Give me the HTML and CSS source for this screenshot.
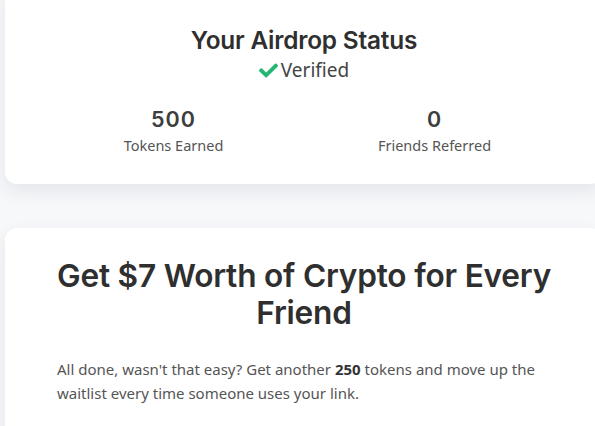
FILE: index.html
```html
<!DOCTYPE html>
<html>
<head>
<meta charset="utf-8">
<link rel="stylesheet" href="styles.css">
</head>
<body>
<div class="page">
  <section class="card status">
    <h2 class="status-title">Your Airdrop Status</h2>
    <div class="verified">
      <svg class="check" viewBox="0 0 512 400" width="19" height="15" aria-hidden="true"><path d="M173.898 383.404l-166.4-166.4c-9.997-9.997-9.997-26.206 0-36.204l36.203-36.204c9.997-9.998 26.207-9.998 36.204 0L192 256.69 432.095 16.596c9.997-9.997 26.207-9.997 36.204 0l36.203 36.204c9.997 9.997 9.997 26.206 0 36.204l-294.4 294.401c-9.998 9.997-26.207 9.997-36.204-.001z" fill="#22b573"/></svg>
      <span>Verified</span>
    </div>
    <div class="stats">
      <div class="stat">
        <div class="stat-num">500</div>
        <div class="stat-label">Tokens Earned</div>
      </div>
      <div class="stat">
        <div class="stat-num">0</div>
        <div class="stat-label">Friends Referred</div>
      </div>
    </div>
  </section>
  <section class="card refer">
    <h1 class="refer-title">Get $7 Worth of Crypto for Every Friend</h1>
    <p class="refer-text">All done, wasn't that easy? Get another <strong>250</strong> tokens and move up the waitlist every time someone uses your link.</p>
  </section>
</div>
</body>
</html>
```

FILE: styles.css
```css
html, body {
  margin: 0;
  padding: 0;
}
body {
  background: #f7f8fa;
  overflow: hidden;
  width: 595px;
  height: 426px;
}
.page {
  display: flex;
  flex-direction: column;
  gap: 44px;
  margin-top: -13px;
  padding-left: 5px;
  width: 598px;
}
.card {
  background: #ffffff;
  border-radius: 12px;
  box-shadow: 0 7px 18px rgba(30, 40, 70, 0.09);
}
.status {
  padding: 38px 38px 28px;
  text-align: center;
}
.status-title {
  margin: 0;
  font-family: Inter, "Liberation Sans", sans-serif;
  font-weight: 600;
  font-size: 24.4px;
  line-height: 30px;
  color: #2f2f2f;
  letter-spacing: -0.2px;
}
.verified {
  display: flex;
  justify-content: center;
  align-items: center;
  gap: 3px;
  margin-top: 1px;
  font-family: "Noto Sans", sans-serif;
  font-size: 19px;
  line-height: 28px;
  color: #444;
}
.check {
  display: block;
  margin-top: 1px;
}
.stats {
  display: grid;
  grid-template-columns: 1fr 1fr;
  margin-top: 22px;
}
.stat-num {
  font-family: Inter, "Liberation Sans", sans-serif;
  font-weight: 600;
  font-size: 21.5px;
  line-height: 26px;
  letter-spacing: 1px;
  color: #3d3d3d;
}
.stat-label {
  margin-top: 2px;
  font-family: "Noto Sans", sans-serif;
  font-size: 14.5px;
  line-height: 22px;
  color: #555;
}
.refer {
  padding: 29px 40px 30px;
  height: 240px;
}
.refer-title {
  margin: 0;
  text-align: center;
  font-family: Inter, "Liberation Sans", sans-serif;
  font-weight: 600;
  font-size: 31.6px;
  line-height: 37px;
  color: #2f2f2f;
  letter-spacing: -0.2px;
}
.refer-text {
  margin: 26px 0 0;
  padding-left: 12px;
  font-family: "Noto Sans", sans-serif;
  font-size: 15px;
  line-height: 24px;
  color: #555;
}
.refer-text strong {
  color: #333;
  font-weight: 700;
}
```
